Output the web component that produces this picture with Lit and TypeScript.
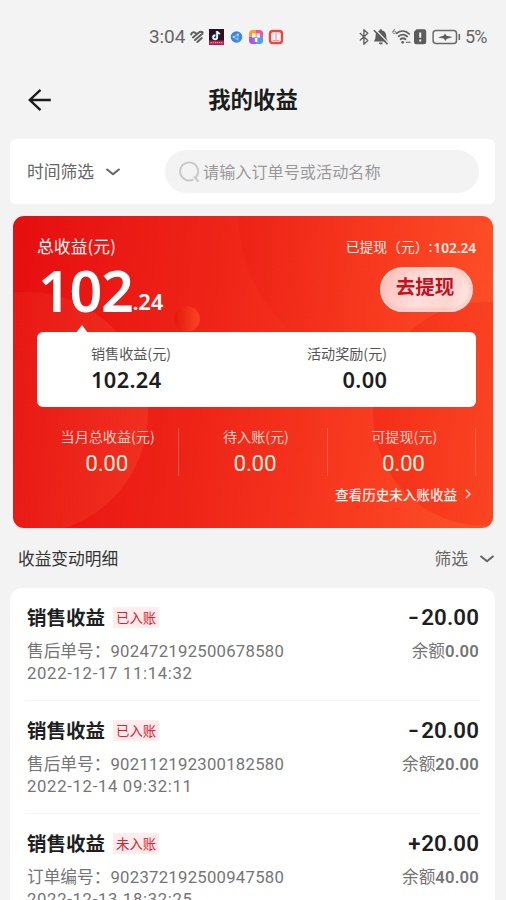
import { LitElement, html, css, svg } from "lit";
import { customElement, property } from "lit/decorators.js";

interface Entry {
  status: string;
  label: string;
  order: string;
  time: string;
  amount: string;
  balance: string;
}

const ENTRIES: Entry[] = [
  { status: "已入账", label: "售后单号：", order: "902472192500678580", time: "2022-12-17 11:14:32", amount: "-20.00", balance: "0.00" },
  { status: "已入账", label: "售后单号：", order: "902112192300182580", time: "2022-12-14 09:32:11", amount: "-20.00", balance: "20.00" },
  { status: "未入账", label: "订单编号：", order: "902372192500947580", time: "2022-12-13 18:32:25", amount: "+20.00", balance: "40.00" },
];

const STATS = [
  { label: "当月总收益(元)", value: "0.00" },
  { label: "待入账(元)", value: "0.00" },
  { label: "可提现(元)", value: "0.00" },
];

const chevronDown = svg`<path d="M1.2 1.5 7 6.200l5.800-4.700" fill="none" stroke="#666" stroke-width="2.100" stroke-linecap="round" stroke-linejoin="round"/>`;

@customElement("status-bar")
export class StatusBar extends LitElement {
  static styles = css`
    :host {
      display: flex;
      align-items: center;
      justify-content: space-between;
      height: 34px;
      padding: 20px 18px 0 149px;
      font-family: Roboto, "Liberation Sans", sans-serif;
      color: #666;
    }
    .side { display: flex; align-items: center; }
    .time { font-size: 19px; line-height: 34px; width: 41px; letter-spacing: -0.1px; }
    .battery { font-size: 18px; line-height: 34px; letter-spacing: -0.9px; width: 23px; }
    svg { display: block; }
  `;
  render() {
    return html`
      <div class="side">
        <span class="time">3:04</span>
        <svg width="94" height="20" viewBox="190 27 94 20">
          <g fill="none" stroke="#606060" stroke-width="2" stroke-linecap="round">
            <path d="M191.200 34.500c.3-2.300 2.700-3 4.600-1.300M192.900 37.400l5.600-4.700c1.500-1.200 2.900-1.100 4.200-.3M195 40l7.300-6.200M197.400 42l4.400-3.900"/>
          </g>
          <rect x="209" y="29" width="15" height="16" fill="#2b1020"/>
          <rect x="209" y="40.500" width="15" height="4.500" fill="#b41f4d"/>
          <path d="M210.500 42.700h12" stroke="#e58ba4" stroke-width="1.300" stroke-dasharray="1.500 .6"/>
          <path d="M216.700 31v6.200a2 2 0 1 1-1.900-2" fill="none" stroke="#38d9df" stroke-width="1.800"/>
          <path d="M217.300 31v6.400a2 2 0 1 1-1.900-2M217.300 31.200c.2 1.700 1.300 2.500 2.900 2.600" fill="none" stroke="#fff" stroke-width="1.600"/>
          <circle cx="236.500" cy="37" r="5.800" fill="#3b87dc"/>
          <path d="M233.500 37 238 34.300v5.600z" fill="none" stroke="#8cc4f6" stroke-width="1.100"/>
          <circle cx="233.500" cy="37" r="1" fill="#b4daff"/><circle cx="238" cy="34.400" r="1" fill="#b4daff"/>
          <clipPath id="sq"><rect x="249" y="30" width="14" height="14" rx="3.500"/></clipPath>
          <g clip-path="url(#sq)">
            <rect x="249" y="30" width="7" height="7" fill="#ff9d35"/>
            <rect x="256" y="30" width="7" height="7" fill="#f0549a"/>
            <rect x="249" y="37" width="7" height="7" fill="#a55be8"/>
            <rect x="256" y="37" width="7" height="7" fill="#45a6f3"/>
          </g>
          <path d="M252 33.500h3.500v4H252zM256.500 33.500h3.500v4h-3.500zM254.800 38h2.600v4h-2.600z" fill="#fff" opacity=".9"/>
          <rect x="270" y="31" width="12" height="12" rx="2.800" fill="#fff4f3" stroke="#e8484c" stroke-width="2.400"/>
          <path d="M276 32.500v8" stroke="#ee8583" stroke-width="1"/>
          <path d="M272.500 40.500h7" stroke="#f09a98" stroke-width="1"/>
        </svg>
      </div>
      <div class="side">
        <svg width="107" height="20" viewBox="358 27 107 20">
          <path d="m359.800 33 8 7.500-3.900 3.800V29.700l3.900 3.500-8 7.400" fill="none" stroke="#636363" stroke-width="1.400" stroke-linejoin="round"/>
          <path d="M380.800 29.300c.8 0 1.200.5 1.300 1.200 2.900.7 4.100 2.600 4.100 5.300 0 2.700.5 3.900 1.900 5.600h-14.400c1.400-1.700 1.900-2.900 1.900-5.600 0-2.700 1.100-4.600 3.900-5.300.1-.7.500-1.200 1.300-1.200zM378.800 42.400h4a2 2 0 0 1-4 0z" fill="#5c5c5c"/>
          <path d="m375.400 29.500 13.200 13.600" stroke="#f3f3f3" stroke-width="1.300"/>
          <path d="m373.900 30.300 13.700 14" stroke="#5c5c5c" stroke-width="1.600"/>
          <g fill="none" stroke="#636363" stroke-width="1.800" stroke-linecap="round">
            <path d="M396.700 33.200c3.900-2.900 8.900-2.600 12.400.6M398.700 36.300c2.600-2 6-1.900 8.500.2M400.600 39.200c1.500-1.200 3.400-1.100 4.800.1"/>
          </g>
          <circle cx="402.700" cy="42.300" r="1.400" fill="#636363"/>
          <path d="M406 42.300h4.500" stroke="#888" stroke-width="1.600"/>
          <path d="M395 29.300c-1.400.3-2.200 1.400-2.200 2.800 0 2 3 2 3 .2 0-1.500-2.100-1.600-2.800-.4" fill="none" stroke="#707070" stroke-width=".9"/>
          <path d="M416.500 29.200h7.500a2.200 2.200 0 0 1 2.200 2.200v10.700a2.200 2.200 0 0 1-2.200 2.200h-7.800a2.200 2.200 0 0 1-2.200-2.200V31.700z" fill="#5c5c5c"/>
          <path d="M420.200 32.500v5.300M420.200 39.500v2" stroke="#f3f3f3" stroke-width="2"/>
          <rect x="433.100" y="30.500" width="23.400" height="13" rx="3" fill="none" stroke="#6a6a6a" stroke-width="1.500"/>
          <path d="M459.300 34v6" stroke="#6a6a6a" stroke-width="1.600"/>
          <path d="m438 37.500 5.900-2 1-2 1.600 2.200 6 1.200-6 2-1 2-1.700-2.400z" fill="#5c5c5c"/>
        </svg>
        <span class="battery">5%</span>
      </div>
    `;
  }
}

@customElement("earnings-card")
export class EarningsCard extends LitElement {
  static styles = css`
    :host {
      display: block;
      position: relative;
      height: 312px;
      margin: 12px 13px 0 13px;
      border-radius: 11px;
      overflow: hidden;
      color: #fff;
      background: linear-gradient(97deg, #e60f10 2%, #ef2518 42%, #f93d20 75%, #fd5329 100%);
    }
    svg { display: block; }
    .decor { position: absolute; inset: 0; }
    .content { position: relative; padding: 0 17px 0 24px; }
    .num { font-family: Roboto, "Noto Sans", sans-serif; }
    .top { display: flex; justify-content: space-between; height: 110px; }
    .label { font-size: 16.700px; line-height: 24px; padding-top: 18px; letter-spacing: 0.150px; }
    .total { display: flex; align-items: flex-end; font-family: "Noto Sans", sans-serif; font-weight: 600; margin: 6px 0 0 1px; }
    .big { font-size: 57.500px; line-height: 52px; letter-spacing: -1.400px; }
    .cents { font-size: 22px; line-height: 29px; letter-spacing: -0.200px; }
    .right { display: flex; flex-direction: column; align-items: flex-end; }
    .drawn { font-size: 13.800px; line-height: 20px; padding-top: 20px; white-space: nowrap; color: #fff0e6; }
    .drawn b { font: 600 13.600px "Noto Sans", sans-serif; position: relative; top: 1px; margin-left: 1px; }
    .cash {
      box-sizing: border-box;
      width: 93px;
      height: 45px;
      margin: 11px 3px 0 0;
      border-radius: 23px;
      border: 2px solid #ffd5cf;
      background: linear-gradient(110deg, #ffbfb9, #ffe0dc 45%, #ffd5cf 75%, #fff0ec);
      box-shadow: inset 0 0 4px #ffada4;
      color: #c4101f;
      font-size: 19.500px;
      font-weight: 700;
      line-height: 34px;
      text-align: center;
      padding-right: 3px;
    }
    .split {
      position: relative;
      display: flex;
      justify-content: space-between;
      box-sizing: border-box;
      width: 439px;
      height: 75px;
      margin-top: 6px;
      padding: 10px 89px 0 54px;
      border-radius: 6px;
      background: #fff;
      color: #555;
      font-size: 14.100px;
      line-height: 22px;
    }
    .split::before {
      content: "";
      position: absolute;
      left: 39px;
      top: -7px;
      border: 6px solid transparent;
      border-top: 0;
      border-bottom: 8px solid #fff;
    }
    .split .num { color: #1d1d1d; font-family: "Noto Sans", sans-serif; font-weight: 600; font-size: 21.800px; line-height: 32px; letter-spacing: 0.350px; margin-right: -0.350px; }
    .award { text-align: right; }
    .stats { display: flex; width: 445px; margin-top: 21px; margin-left: -6px; }
    .stat {
      flex: none;
      box-sizing: border-box;
      width: 148.300px;
      height: 48px;
      text-align: center;
      font-size: 14.100px;
      line-height: 16px;
      color: #ffd0c4;
      border-right: 1px solid rgba(255, 190, 170, 0.35);
      padding-left: 6px;
    }
    .stat .num { color: #fff1dc; font-size: 22.300px; font-weight: 400; line-height: 38px; letter-spacing: -0.200px; margin-left: -2px; }
    .history { display: flex; align-items: center; justify-content: flex-end; gap: 8px; height: 20px; margin: 8px 5px 0 0; font-size: 13.550px; color: #fff3ec; font-weight: 500; }
  `;
  render() {
    return html`
      <svg class="decor" width="480" height="312" viewBox="13 216 480 312">
        <defs>
          <linearGradient id="l" x1="0" y1="0" x2="1" y2="0"><stop offset=".2" stop-color="#ff6a40" stop-opacity=".04"/><stop offset="1" stop-color="#ff6a40" stop-opacity=".22"/></linearGradient>
          <linearGradient id="r" x1="0" y1="0" x2="1" y2="0"><stop offset="0" stop-color="#f01c10" stop-opacity=".45"/><stop offset="1" stop-color="#f83a20" stop-opacity=".3"/></linearGradient>
          <linearGradient id="t" x1="0" y1="0" x2="1" y2="0"><stop offset="0" stop-color="#e81810" stop-opacity=".3"/><stop offset=".6" stop-color="#f83a20" stop-opacity="0"/></linearGradient>
          <linearGradient id="s" x1="0" y1="0" x2="1" y2="0"><stop offset="0" stop-color="#e5180f"/><stop offset="1" stop-color="#fb4424"/></linearGradient>
        </defs>
        <circle cx="400" cy="212" r="162" fill="url(#t)"/>
        <circle cx="27" cy="413" r="121" fill="url(#l)"/>
        <circle cx="485" cy="414" r="112" fill="url(#r)"/>
        <circle cx="187" cy="319" r="12.800" fill="url(#s)"/>
      </svg>
      <div class="content">
        <div class="top">
          <div>
            <div class="label">总收益(元)</div>
            <div class="total"><span class="big">102</span><span class="cents">.24</span></div>
          </div>
          <div class="right">
            <div class="drawn">已提现（元）:<b>102.24</b></div>
            <div class="cash">去提现</div>
          </div>
        </div>
        <div class="split">
          <div>销售收益(元)<div class="num">102.24</div></div>
          <div class="award">活动奖励(元)<div class="num">0.00</div></div>
        </div>
        <div class="stats">
          ${STATS.map((s) => html`<div class="stat">${s.label}<div class="num">${s.value}</div></div>`)}
        </div>
        <div class="history">
          <span>查看历史未入账收益</span>
          <svg width="6" height="10" viewBox="0 0 6 10"><path d="m.8.8 4.200 4.200L.8 9.200" fill="none" stroke="#ffe6dc" stroke-width="1.300"/></svg>
        </div>
      </div>
    `;
  }
}

@customElement("entry-row")
export class EntryRow extends LitElement {
  @property({ attribute: false }) entry!: Entry;
  static styles = css`
    :host {
      display: block;
      box-sizing: border-box;
      height: 113px;
      padding: 14px 1px 0 2px;
      border-bottom: 1px solid #f5f5f5;
    }
    .line { display: flex; justify-content: space-between; align-items: center; }
    .head { height: 30px; }
    .name { display: flex; align-items: center; gap: 8px; font-size: 19.500px; font-weight: 700; color: #1f1f1f; line-height: 30px; }
    .tag { font-size: 13.400px; font-weight: 400; line-height: 20px; height: 21px; padding: 0 3px; background: #ffecec; color: #d92332; }
    .amount { font: 600 22.300px/30px Roboto, "Noto Sans", sans-serif; letter-spacing: 0.100px; color: #1f1f1f; }
    .sign { display: inline-block; margin-right: 0.500px; }
    .minus { transform: scaleX(1.350); transform-origin: right; margin-right: 1.500px; }
    .meta { font-size: 16.700px; line-height: 22px; color: #757575; }
    .second { height: 22px; margin-top: 8px; }
    .digits { font-family: Roboto, "Noto Sans", sans-serif; letter-spacing: 0.270px; }
    .time { margin-top: 1px; letter-spacing: 0.680px; }
    .balance { font: 600 16.700px/22px Roboto, "Noto Sans", sans-serif; letter-spacing: 0.150px; color: #757575; }
  `;
  render() {
    const e = this.entry;
    const sign = e.amount[0];
    return html`
      <div class="line head">
        <div class="name"><span>销售收益</span><span class="tag">${e.status}</span></div>
        <span class="amount"><span class="sign ${sign === "-" ? "minus" : ""}">${sign}</span>${e.amount.slice(1)}</span>
      </div>
      <div class="line meta second">
        <span>${e.label}<span class="digits">${e.order}</span></span>
        <span>余额<span class="balance">${e.balance}</span></span>
      </div>
      <div class="meta digits time">${e.time}</div>
    `;
  }
}

@customElement("app-root")
export class AppRoot extends LitElement {
  static styles = css`
    :host {
      display: block;
      height: 900px;
      overflow: hidden;
      background: #f3f3f3;
      font-family: "Noto Sans CJK SC", sans-serif;
    }
    svg { display: block; }
    .header { display: grid; grid-template-columns: 60px 1fr 60px; align-items: center; height: 50px; margin-top: 20px; }
    .back { margin: 1px 0 0 28px; }
    .title { text-align: center; font-size: 22.400px; font-weight: 700; color: #1c1c1c; line-height: 48px; height: 50px; }
    .filter {
      display: flex;
      align-items: center;
      justify-content: space-between;
      box-sizing: border-box;
      height: 65px;
      margin: 15px 11px 0 10px;
      padding: 0 16px 0 17px;
      background: #fff;
      border-radius: 6px;
    }
    .range { display: flex; align-items: center; gap: 12px; font-size: 16.800px; color: #666; }
    .filter span { margin-top: -2px; }
    .search {
      display: flex;
      align-items: center;
      gap: 3px;
      box-sizing: border-box;
      width: 314px;
      height: 43px;
      padding-left: 13px;
      border-radius: 22px;
      background: #f3f3f3;
      font-size: 16.150px;
      color: #999;
    }
    .section { display: flex; align-items: center; justify-content: space-between; height: 60px; padding: 0 12px 0 18px; font-size: 16.700px; color: #333; }
    .section .range { color: #666; }
    .section svg { margin-top: 2px; }
    .list { margin: 0 11px 0 10px; padding: 0 15px; border-radius: 12px; background: #fff; }
  `;
  render() {
    return html`
      <status-bar></status-bar>
      <div class="header">
        <svg class="back" width="24" height="24" viewBox="0 0 24 24"><path d="M12.500 1.800 1.800 12l10.700 10.200M2 12h20.800" fill="none" stroke="#1c1c1c" stroke-width="2.400"/></svg>
        <div class="title">我的收益</div>
      </div>
      <div class="filter">
        <div class="range"><span>时间筛选</span><svg width="14" height="8" viewBox="0 0 14 8">${chevronDown}</svg></div>
        <div class="search">
          <svg width="22" height="22" viewBox="0 0 22 22"><path d="M15.500 18.300a9 9 0 1 1 2.300-1.800M16 15.500l4.500 5" fill="none" stroke="#c8c8c8" stroke-width="1.900"/></svg>
          <span>请输入订单号或活动名称</span>
        </div>
      </div>
      <earnings-card></earnings-card>
      <div class="section">
        <span>收益变动明细</span>
        <div class="range"><span>筛选</span><svg width="14" height="8" viewBox="0 0 14 8">${chevronDown}</svg></div>
      </div>
      <div class="list">
        ${ENTRIES.map((e) => html`<entry-row .entry=${e}></entry-row>`)}
      </div>
    `;
  }
}
